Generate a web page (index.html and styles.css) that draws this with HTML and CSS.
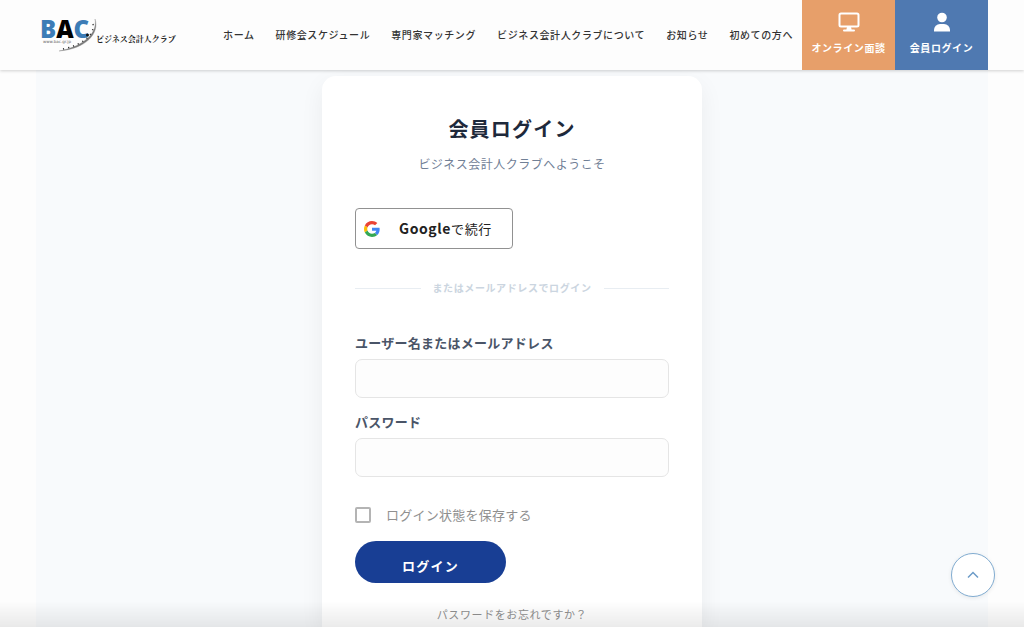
FILE: index.html
```html
<!DOCTYPE html>
<html lang="ja">
<head>
<meta charset="utf-8">
<meta name="viewport" content="width=device-width, initial-scale=1">
<title>会員ログイン</title>
<link rel="stylesheet" href="styles.css">
</head>
<body>
<header class="header">
  <a class="logo" href="#" aria-label="BAC ビジネス会計人クラブ">
    <span class="logo-mark">
      <span class="logo-bac"><b>B</b><b class="dark">A</b><b>C</b></span>
      <span class="logo-url">www.bac.gr.jp</span>
      <svg class="logo-curve" viewBox="0 0 40 34" aria-hidden="true">
        <path d="M37 1C42 15 28 31 1 33C24 29 40 16 37 1Z" fill="#777" stroke="#999" stroke-width=".4"/>
        <path d="M35 6C37 17 24 27 5 31" fill="none" stroke="#333" stroke-width="1.4" stroke-dasharray="1.2 4"/>
        <circle cx="29.500" cy="17" r="1.500" fill="#111"/>
      </svg>
    </span>
    <span class="logo-name">ビジネス会計人クラブ</span>
  </a>
  <nav class="nav">
    <a href="#">ホーム</a>
    <a href="#">研修会スケジュール</a>
    <a href="#">専門家マッチング</a>
    <a href="#">ビジネス会計人クラブについて</a>
    <a href="#">お知らせ</a>
    <a href="#">初めての方へ</a>
  </nav>
  <div class="actions">
    <a class="action action-meeting" href="#">
      <svg viewBox="0 0 22 20" aria-hidden="true"><rect x="1.500" y="1.500" width="19" height="13" rx="1.500" fill="none" stroke="#fff" stroke-width="2"/><path d="M9 15h4l.6 2.500H16a1 1 0 0 1 0 2H6a1 1 0 0 1 0-2h2.400z" fill="#fff"/></svg>
      <span>オンライン面談</span>
    </a>
    <a class="action action-login" href="#">
      <svg viewBox="0 0 22 20" aria-hidden="true"><circle cx="11" cy="5.500" r="4.800" fill="#fff"/><path d="M3 19.500v-1.500a6 6 0 0 1 6-6h4a6 6 0 0 1 6 6v1.500z" fill="#fff"/></svg>
      <span>会員ログイン</span>
    </a>
  </div>
</header>
<main class="main">
  <section class="card">
    <h1 class="title">会員ログイン</h1>
    <p class="subtitle">ビジネス会計人クラブへようこそ</p>
    <button class="google" type="button">
      <svg viewBox="0 0 48 48" aria-hidden="true">
        <path fill="#EA4335" d="M24 9.500c3.540 0 6.710 1.220 9.210 3.600l6.850-6.850C35.900 2.380 30.470 0 24 0 14.620 0 6.510 5.380 2.560 13.220l7.980 6.190C12.430 13.720 17.740 9.500 24 9.500z"/>
        <path fill="#4285F4" d="M46.980 24.550c0-1.570-.15-3.090-.38-4.550H24v9.020h12.940c-.58 2.960-2.260 5.480-4.780 7.180l7.730 6c4.510-4.180 7.090-10.360 7.090-17.650z"/>
        <path fill="#FBBC05" d="M10.530 28.590c-.48-1.450-.76-2.990-.76-4.590s.27-3.140.76-4.590l-7.980-6.190C.92 16.460 0 20.120 0 24s.92 7.540 2.560 10.780l7.970-6.190z"/>
        <path fill="#34A853" d="M24 48c6.480 0 11.930-2.130 15.890-5.810l-7.730-6c-2.150 1.450-4.920 2.300-8.160 2.300-6.260 0-11.570-4.220-13.470-9.910l-7.980 6.190C6.510 42.620 14.620 48 24 48z"/>
      </svg>
      <span class="google-text"><b>Google</b>で続行</span>
    </button>
    <div class="divider"><span>またはメールアドレスでログイン</span></div>
    <form class="form">
      <label class="label" for="user">ユーザー名またはメールアドレス</label>
      <input class="input" id="user" type="text">
      <label class="label" for="password">パスワード</label>
      <input class="input" id="password" type="password">
      <label class="remember"><input class="check" type="checkbox"><span>ログイン状態を保存する</span></label>
      <button class="submit" type="submit">ログイン</button>
    </form>
    <a class="forgot" href="#">パスワードをお忘れですか？</a>
  </section>
</main>
<div class="fade"></div>
<a class="to-top" href="#" aria-label="ページの先頭へ">
  <svg viewBox="0 0 12 8" aria-hidden="true"><path d="M1 6.500L6 1.500L11 6.500" fill="none" stroke="#6d9cc8" stroke-width="1.500"/></svg>
</a>
</body>
</html>
```
FILE: styles.css
```css
* { box-sizing: border-box; }
body {
  margin: 0;
  min-height: 100vh;
  display: flex;
  flex-direction: column;
  background: #fdfdfd;
  color: #333;
  font-family: "Noto Sans CJK JP", sans-serif;
  font-size: 10px;
  letter-spacing: 0.06em;
}
a { color: inherit; text-decoration: none; }
button, input { font-family: inherit; letter-spacing: inherit; }

.header {
  position: relative;
  z-index: 1;
  display: flex;
  align-items: center;
  height: 70px;
  padding: 0 36px;
  background: #fdfdfd;
  box-shadow: 0 1px 3px rgba(0, 0, 0, 0.18);
  white-space: nowrap;
}
.logo { display: flex; align-items: flex-end; height: 34px; padding-left: 4px; color: #222; letter-spacing: 0; }
.logo-mark { position: relative; width: 56px; height: 34px; }
.logo-bac { display: block; font: bold 24px/21px "Open Sans", sans-serif; color: #3c7cb6; }
.logo-bac .dark { color: #000; }
.logo-url { display: block; padding-left: 3px; font: 4px/6px "DejaVu Sans", sans-serif; color: #666; }
.logo-curve { position: absolute; left: 18px; top: 0; width: 40px; height: 34px; }
.logo-name { font-family: "Noto Serif CJK JP", "Noto Sans CJK JP", serif; font-size: 8px; line-height: 12px; font-weight: bold; padding-bottom: 7px; }

.nav { display: flex; gap: 21px; margin-left: auto; line-height: 20px; font-weight: 500; }
.actions { display: flex; align-self: stretch; margin-left: 9px; }
.action {
  display: flex;
  flex-direction: column;
  align-items: center;
  gap: 8px;
  width: 93px;
  padding-top: 12px;
  color: #fff;
  font-weight: bold;
  line-height: 16px;
}
.action svg { width: 22px; height: 20px; }
.action-meeting { background: #e79f6a; }
.action-login { background: #4f79b1; }

.main {
  flex: 1;
  display: flex;
  justify-content: center;
  margin: 0 36px;
  padding-top: 6px;
  background: #f8fafc;
}
.card {
  display: flex;
  flex-direction: column;
  width: 380px;
  padding: 37px 33px 0;
  border-radius: 14px 14px 0 0;
  background: #fff;
  box-shadow: 0 8px 24px rgba(15, 23, 42, 0.06);
}
.title { margin: 0; font-size: 20px; line-height: 32px; text-align: center; color: #1e293b; letter-spacing: 0.06em; }
.subtitle { margin: 9px 0 34px; font-size: 12px; line-height: 20px; text-align: center; color: #718096; letter-spacing: 0.04em; }
.google {
  display: flex;
  align-items: center;
  gap: 19px;
  align-self: flex-start;
  width: 158px;
  height: 41px;
  padding: 0 8px;
  border: 1px solid #919191;
  border-radius: 4px;
  background: #fff;
  color: #222;
  font-size: 13px;
}
.google b { font-size: 14px; }
.google svg { width: 16px; height: 16px; flex: none; }
.google-text { white-space: nowrap; line-height: 20px; }
.divider {
  display: flex;
  align-items: center;
  gap: 12px;
  margin: 29px 0 35px;
  color: #cbd5e0;
  font-weight: bold;
  line-height: 20px;
}
.divider::before, .divider::after { content: ""; flex: 1; height: 1px; background: #e8edf2; }
.form { display: flex; flex-direction: column; }
.label { margin-bottom: 6px; font-size: 13px; line-height: 20px; font-weight: bold; color: #4a5568; letter-spacing: 0.02em; }
.input {
  height: 39px;
  margin-bottom: 14px;
  padding: 0 12px;
  border: 1px solid #e5e5e5;
  border-radius: 7px;
  background: #fdfdfd;
  font-size: 14px;
}
.remember { display: flex; align-items: center; gap: 15px; margin: 14px 0 16px; font-size: 13px; line-height: 20px; color: #909090; letter-spacing: 0.02em; }
.check { appearance: none; width: 16px; height: 16px; margin: 0; border: 2px solid #b4b4b4; border-radius: 2px; background: #fff; }
.submit {
  align-self: flex-start;
  width: 151px;
  height: 42px;
  padding: 8px 0 0;
  border: 0;
  border-radius: 21px;
  background: #183e94;
  color: #fff;
  font-size: 13px;
  line-height: 20px;
  font-weight: bold;
  letter-spacing: 0.1em;
}
.forgot { margin-top: 21px; font-size: 11px; line-height: 20px; text-align: center; color: #909090; }

.fade {
  position: fixed;
  inset: auto 0 0;
  height: 26px;
  background: linear-gradient(rgba(0, 0, 0, 0), rgba(0, 0, 0, 0.08));
  pointer-events: none;
}
.to-top {
  position: fixed;
  right: 29px;
  bottom: 30px;
  display: flex;
  align-items: center;
  justify-content: center;
  width: 44px;
  height: 44px;
  border: 1px solid #80abd0;
  border-radius: 50%;
  background: #fff;
  box-shadow: 0 1px 4px rgba(0, 0, 0, 0.08);
}
.to-top svg { width: 12px; height: 8px; }
```
